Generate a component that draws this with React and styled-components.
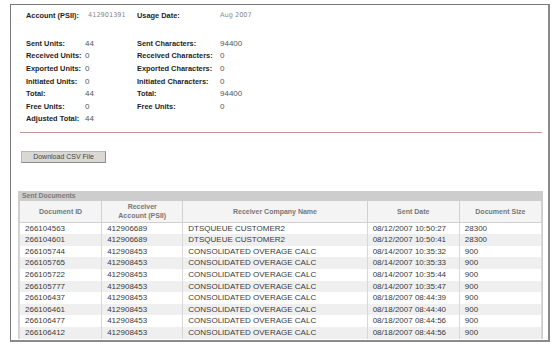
import React from "react";
import styled, { createGlobalStyle } from "styled-components";

const GlobalStyle = createGlobalStyle`
  body {
    margin: 0;
    background: #ffffff;
    font-family: "Liberation Sans", Arial, sans-serif;
  }
`;

const Frame = styled.div`
  box-sizing: border-box;
  margin: 4px 0 0 10px;
  width: 540px;
  height: 338px;
  border: 1px solid #7a7a7a;
  border-right: 2px solid #8a8a8a;
  border-bottom: 2px solid #8a8a8a;
  background: #ffffff;
  overflow: hidden;
`;

const InfoGrid = styled.div`
  display: grid;
  grid-template-columns: ${(p) => p.cols};
  grid-auto-rows: ${(p) => p.rowH || "12px"};
  align-items: center;
  margin: ${(p) => p.mt} 0 0 15px;
`;

const Label = styled.span`
  font-size: 7.4px;
  font-weight: bold;
  color: #1e1e1e;
  white-space: nowrap;
`;

const Value = styled.span`
  font-size: ${(p) => (p.small ? "6.6px" : "8px")};
  color: ${(p) => (p.small ? "#8a8a8a" : "#555")};
  font-family: ${(p) => (p.small ? '"DejaVu Sans", Verdana, sans-serif' : "inherit")};
  white-space: nowrap;
`;

const Rule = styled.hr`
  margin: 6.5px 6px 0 9px;
  border: none;
  height: 1px;
  background: #c29a90;
`;

const Button = styled.button`
  box-sizing: border-box;
  display: block;
  margin: 18px 0 0 10px;
  width: 85px;
  height: 12px;
  padding: 0;
  background: #dad8d4;
  border: 1px solid #8c8c8c;
  border-top-color: #b8b8b8;
  border-left-color: #b8b8b8;
  font-family: "Liberation Sans", Arial, sans-serif;
  font-size: 7px;
  color: #444;
`;

const TableBox = styled.div`
  margin: 28px 0 0 7px;
  width: 523px;
  background: #cdcdcd;
  padding: 0 1px;
`;

const Caption = styled.div`
  height: 10px;
  line-height: 10px;
  padding-left: 3px;
  font-size: 6.8px;
  font-weight: bold;
  color: #7a7a7a;
`;

const Table = styled.table`
  width: 100%;
  border-collapse: collapse;
  table-layout: fixed;
  background: #ffffff;
`;

const Th = styled.th`
  height: 21px;
  padding: 0 2px;
  background: #f4f4f4;
  border: 1px solid #d0d0d0;
  border-top: none;
  font-size: 7px;
  font-weight: bold;
  color: #777;
  line-height: 9px;
  text-align: center;
`;

const Tr = styled.tr`
  background: ${(p) => (p.alt ? "#efefef" : "#ffffff")};
`;

const Td = styled.td`
  height: 11.6px;
  padding: 0 0 0 5px;
  border-right: 1px solid #d8d8d8;
  border-left: 1px solid #d8d8d8;
  font-size: 8px;
  line-height: 11.6px;
  color: #3a3a3a;
  white-space: nowrap;
  overflow: hidden;
`;

const stats = [
  ["Sent Units:", "44", "Sent Characters:", "94400"],
  ["Received Units:", "0", "Received Characters:", "0"],
  ["Exported Units:", "0", "Exported Characters:", "0"],
  ["Initiated Units:", "0", "Initiated Characters:", "0"],
  ["Total:", "44", "Total:", "94400"],
  ["Free Units:", "0", "Free Units:", "0"],
  ["Adjusted Total:", "44", "", ""],
];

const docs = [
  ["266104563", "412906689", "DTSQUEUE CUSTOMER2", "08/12/2007 10:50:27", "28300"],
  ["266104601", "412906689", "DTSQUEUE CUSTOMER2", "08/12/2007 10:50:41", "28300"],
  ["266105744", "412908453", "CONSOLIDATED OVERAGE CALC", "08/14/2007 10:35:32", "900"],
  ["266105765", "412908453", "CONSOLIDATED OVERAGE CALC", "08/14/2007 10:35:33", "900"],
  ["266105722", "412908453", "CONSOLIDATED OVERAGE CALC", "08/14/2007 10:35:44", "900"],
  ["266105777", "412908453", "CONSOLIDATED OVERAGE CALC", "08/14/2007 10:35:47", "900"],
  ["266106437", "412908453", "CONSOLIDATED OVERAGE CALC", "08/18/2007 08:44:39", "900"],
  ["266106461", "412908453", "CONSOLIDATED OVERAGE CALC", "08/18/2007 08:44:40", "900"],
  ["266106477", "412908453", "CONSOLIDATED OVERAGE CALC", "08/18/2007 08:44:56", "900"],
  ["266106412", "412908453", "CONSOLIDATED OVERAGE CALC", "08/18/2007 08:44:56", "900"],
];

const widths = [82, 81, 184, 92, 82];

export default function App() {
  return (
    <>
      <GlobalStyle />
      <Frame>
        <InfoGrid cols="62px 49px 83px auto" mt="4px">
          <Label>Account (PSII):</Label>
          <Value small>412901391</Value>
          <Label>Usage Date:</Label>
          <Value small>Aug 2007</Value>
        </InfoGrid>

        <InfoGrid cols="59px 52px 83px auto" mt="16px" rowH="12.6px">
          {stats.map((r, i) => (
            <React.Fragment key={i}>
              <Label>{r[0]}</Label>
              <Value>{r[1]}</Value>
              <Label>{r[2]}</Label>
              <Value>{r[3]}</Value>
            </React.Fragment>
          ))}
        </InfoGrid>

        <Rule />

        <Button>Download CSV File</Button>

        <TableBox>
          <Caption>Sent Documents</Caption>
          <Table>
            <colgroup>
              {widths.map((w, i) => (
                <col key={i} style={{ width: w }} />
              ))}
            </colgroup>
            <thead>
              <tr>
                <Th>Document ID</Th>
                <Th>
                  Receiver
                  <br />
                  Account (PSII)
                </Th>
                <Th>Receiver Company Name</Th>
                <Th>Sent Date</Th>
                <Th>Document Size</Th>
              </tr>
            </thead>
            <tbody>
              {docs.map((r, i) => (
                <Tr key={i} alt={i % 2 === 1}>
                  {r.map((c, j) => (
                    <Td key={j}>{c}</Td>
                  ))}
                </Tr>
              ))}
            </tbody>
          </Table>
        </TableBox>
      </Frame>
    </>
  );
}
